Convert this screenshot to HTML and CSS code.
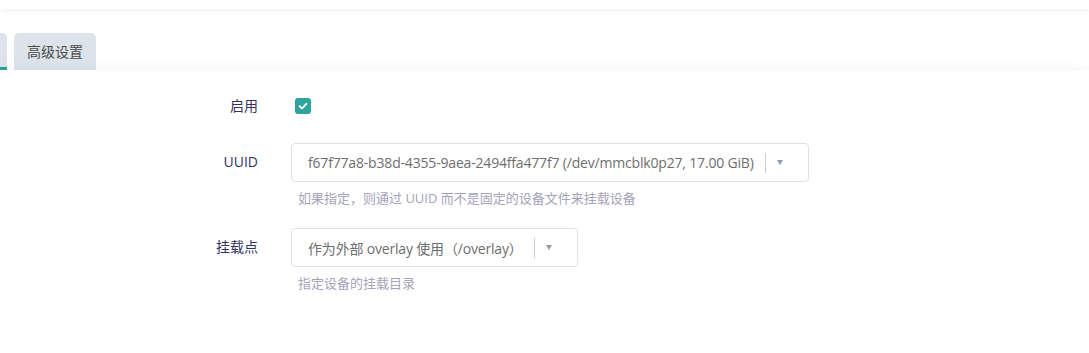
FILE: index.html
```html
<!DOCTYPE html>
<html lang="zh-CN">
<head>
    <meta charset="UTF-8">
    <meta name="viewport" content="width=device-width, initial-scale=1.0">
    <title>挂载点</title>
    <link rel="stylesheet" href="styles.css">
</head>
<body>
    <div class="topbar"></div>
    <ul class="tabs">
        <li class="tab active"></li>
        <li class="tab">高级设置</li>
    </ul>
    <div class="panel">
        <div class="row row-check">
            <label class="row-label">启用</label>
            <div class="row-field">
                <span class="checkbox">
                    <svg width="10" height="10" viewBox="0 0 10 10"><path d="M1.6 5.2 L4 7.4 L8.4 2.8" fill="none" stroke="#fff" stroke-width="1.9" stroke-linecap="round" stroke-linejoin="round"/></svg>
                </span>
            </div>
        </div>
        <div class="row">
            <label class="row-label">UUID</label>
            <div class="row-field">
                <div class="select">
                    <span class="select-text">f67f77a8-b38d-4355-9aea-2494ffa477f7 (/dev/mmcblk0p27, 17.00 GiB)</span>
                    <span class="select-sep"></span>
                    <span class="select-arrow"></span>
                </div>
                <div class="help">如果指定，则通过 UUID 而不是固定的设备文件来挂载设备</div>
            </div>
        </div>
        <div class="row">
            <label class="row-label">挂载点</label>
            <div class="row-field">
                <div class="select">
                    <span class="select-text">作为外部 overlay 使用（/overlay）</span>
                    <span class="select-sep"></span>
                    <span class="select-arrow"></span>
                </div>
                <div class="help">指定设备的挂载目录</div>
            </div>
        </div>
    </div>
</body>
</html>
```

FILE: styles.css
```css
body {
    margin: 0;
    background-color: #fff;
    font-family: "Open Sans", "Noto Sans CJK SC", sans-serif;
    font-size: 14px;
    color: #32325d;
    overflow: hidden;
}
.topbar {
    height: 9px;
    background-color: #fff;
    box-shadow: 0 2px 7px rgba(0, 0, 0, 0.05);
}
.tabs {
    list-style: none;
    margin: 24px 0 0;
    padding: 0;
    display: flex;
    gap: 7px;
}
.tab {
    background-color: #dde3ea;
    color: #4a4a4a;
    border-radius: 5px 5px 0 0;
    height: 37px;
    line-height: 37px;
    padding: 0 13px;
    font-size: 14px;
}
.tab.active {
    width: 7px;
    padding: 0;
    border-radius: 0 5px 0 0;
    box-shadow: inset 0 -3px 0 #2ea39b;
}
.panel {
    position: relative;
    background-color: #fff;
    box-shadow: 0 2px 14px rgba(0, 0, 0, 0.07);
    padding: 17px 0 13px;
}
.row {
    display: flex;
    gap: 33px;
    margin-top: 18px;
}
.row:first-child {
    margin-top: 0;
}
.row + .row + .row {
    margin-top: 20px;
}
.row-label {
    width: 258px;
    flex: none;
    text-align: right;
    height: 38px;
    line-height: 38px;
}
.row-field {
    display: flex;
    flex-direction: column;
    align-items: flex-start;
}
.row-check .row-field {
    height: 38px;
    justify-content: center;
}
.checkbox {
    margin-left: 4px;
    width: 16px;
    height: 16px;
    border-radius: 3px;
    background-color: #2ea39b;
    display: flex;
    align-items: center;
    justify-content: center;
}
.select {
    display: inline-flex;
    align-items: center;
    height: 37px;
    border: 1px solid #dfe1e6;
    border-radius: 4px;
    padding-left: 16px;
    color: #6e6e6e;
}
.select-text {
    white-space: nowrap;
    letter-spacing: -0.18px;
}
.select-sep {
    width: 1px;
    height: 20px;
    background-color: #cfcfcf;
    margin-left: 11px;
}
.select-arrow {
    width: 0;
    height: 0;
    border-left: 3.5px solid transparent;
    border-right: 3.5px solid transparent;
    border-top: 5px solid #8a9bb0;
    margin: 0 25px 0 11px;
}
.help {
    margin-top: 6px;
    padding-left: 7px;
    font-size: 13px;
    line-height: 20px;
    color: #a3a3ba;
}
```
